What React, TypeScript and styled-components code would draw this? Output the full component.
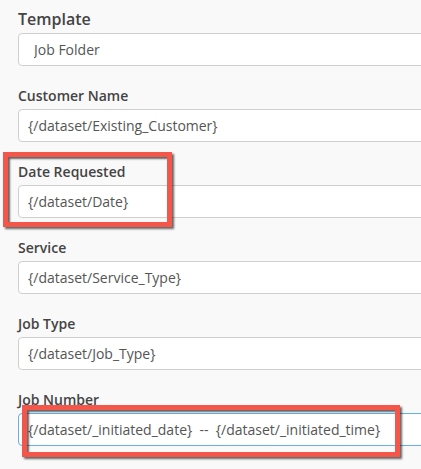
import { ReactElement } from 'react';
import styled, { createGlobalStyle } from 'styled-components';

const GlobalStyle = createGlobalStyle`
  html, body {
    margin: 0;
    padding: 0;
    background: #f9f9f9;
    overflow: hidden;
  }
  body {
    font-family: 'Open Sans', 'Noto Sans', Arial, sans-serif;
  }
`;

const Page = styled.div`
  width: 421px;
  height: 469px;
  overflow: hidden;
  background: #f9f9f9;
  padding: 8px 0 0 18px;
  box-sizing: border-box;
`;

const Form = styled.div`
  width: 460px;
  display: flex;
  flex-direction: column;
  gap: 20px;
`;

const Field = styled.div`
  position: relative;
  display: flex;
  flex-direction: column;
  gap: 3px;
`;

const Label = styled.label<{ $large?: boolean }>`
  font-size: ${(p) => (p.$large ? '16px' : '14px')};
  line-height: ${(p) => (p.$large ? '22px' : '20px')};
  font-weight: 600;
  color: #444;
`;

const Input = styled.input<{ $focused?: boolean; $indent?: boolean }>`
  box-sizing: border-box;
  width: 100%;
  height: 33px;
  margin: 0;
  padding: 0 0 0 ${(p) => (p.$indent ? '15px' : '9px')};
  font-family: 'Open Sans', 'Noto Sans', Arial, sans-serif;
  font-size: 14px;
  color: #555;
  background: #fff;
  border: 1px solid ${(p) => (p.$focused ? '#66afe9' : '#cfcfcf')};
  border-radius: 4px;
  outline: none;
`;

const Highlight = styled.div<{ $thick: number }>`
  position: absolute;
  box-sizing: border-box;
  border: ${(p) => p.$thick}px solid #f4574a;
  box-shadow:
    2px 2px 2px rgba(0, 0, 0, 0.6),
    inset 2px 2px 2px rgba(0, 0, 0, 0.6);
  pointer-events: none;
`;

type Box = { top: number; left: number; width: number; height: number; thick: number };

type FieldDef = {
  label: string;
  value: string;
  large?: boolean;
  indent?: boolean;
  focused?: boolean;
  box?: Box;
};

const FIELDS: FieldDef[] = [
  { label: 'Template', value: 'Job Folder', large: true, indent: true },
  { label: 'Customer Name', value: '{/dataset/Existing_Customer}' },
  {
    label: 'Date Requested',
    value: '{/dataset/Date}',
    box: { top: -10, left: -15, width: 169, height: 75, thick: 5 },
  },
  { label: 'Service', value: '{/dataset/Service_Type}' },
  { label: 'Job Type', value: '{/dataset/Job_Type}' },
  {
    label: 'Job Number',
    value: '{/dataset/_initiated_date}  --  {/dataset/_initiated_time}',
    focused: true,
    box: { top: 15, left: 4, width: 378, height: 52, thick: 5 },
  },
];

export default function App(): ReactElement {
  return (
    <>
      <GlobalStyle />
      <Page>
        <Form>
          {FIELDS.map((f) => (
            <Field key={f.label}>
              <Label $large={f.large}>{f.label}</Label>
              <Input readOnly value={f.value} $indent={f.indent} $focused={f.focused} />
              {f.box && (
                <Highlight
                  $thick={f.box.thick}
                  style={{ top: f.box.top, left: f.box.left, width: f.box.width, height: f.box.height }}
                />
              )}
            </Field>
          ))}
        </Form>
      </Page>
    </>
  );
}
